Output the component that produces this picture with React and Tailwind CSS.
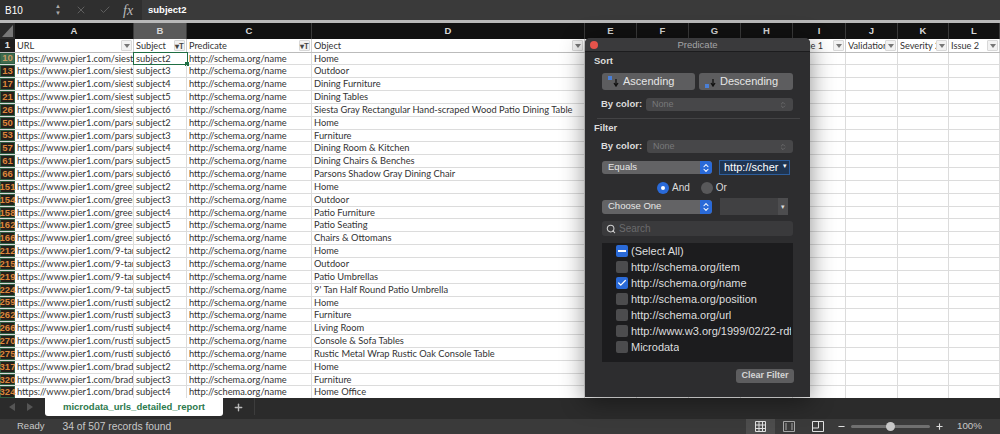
import { ChevronsUpDown, X, Check, Plus, Minus, Search } from "lucide-react";

const sans = "font-['Liberation_Sans',Arial,sans-serif]";
const cell = "font-['Lato',sans-serif]";

const rows = [
  [10, "siest", "subject2", "Home"],
  [13, "siest", "subject3", "Outdoor"],
  [17, "siest", "subject4", "Dining Furniture"],
  [21, "siest", "subject5", "Dining Tables"],
  [26, "siest", "subject6", "Siesta Gray Rectangular Hand-scraped Wood Patio Dining Table"],
  [50, "parsc", "subject2", "Home"],
  [53, "parsc", "subject3", "Furniture"],
  [57, "parsc", "subject4", "Dining Room & Kitchen"],
  [61, "parsc", "subject5", "Dining Chairs & Benches"],
  [66, "parsc", "subject6", "Parsons Shadow Gray Dining Chair"],
  [151, "greei", "subject2", "Home"],
  [154, "greei", "subject3", "Outdoor"],
  [158, "greei", "subject4", "Patio Furniture"],
  [162, "greei", "subject5", "Patio Seating"],
  [166, "greei", "subject6", "Chairs & Ottomans"],
  [212, "9-tar", "subject2", "Home"],
  [215, "9-tar", "subject3", "Outdoor"],
  [219, "9-tar", "subject4", "Patio Umbrellas"],
  [224, "9-tar", "subject5", "9' Tan Half Round Patio Umbrella"],
  [259, "rusti", "subject2", "Home"],
  [262, "rusti", "subject3", "Furniture"],
  [266, "rusti", "subject4", "Living Room"],
  [270, "rusti", "subject5", "Console & Sofa Tables"],
  [275, "rusti", "subject6", "Rustic Metal Wrap Rustic Oak Console Table"],
  [317, "bradi", "subject2", "Home"],
  [320, "bradi", "subject3", "Furniture"],
  [324, "bradi", "subject4", "Home Office"],
];

const columns = [
  ["A", "w-[119px]"],
  ["B", "w-[53px]"],
  ["C", "w-[125px]"],
  ["D", "w-[273px]"],
  ["E", "w-[52px]"],
  ["F", "w-[52px]"],
  ["G", "w-[52px]"],
  ["H", "w-[52px]"],
  ["I", "w-[53px]"],
  ["J", "w-[52px]"],
  ["K", "w-[51px]"],
  ["L", "flex-1"],
];

const filterItems = [
  ["(Select All)", "mixed"],
  ["http://schema.org/item", ""],
  ["http://schema.org/name", "checked"],
  ["http://schema.org/position", ""],
  ["http://schema.org/url", ""],
  ["http://www.w3.org/1999/02/22-rdf-syntax", ""],
  ["Microdata", ""],
];

function FilterArrow({ filtered }) {
  return (
    <span className="absolute right-px top-px flex h-[11px] w-[11px] items-center justify-center rounded-[1px] border border-[#d8d8d8] bg-[#f2f2f2]">
      {filtered ? (
        <span className="text-[8px] font-bold leading-none text-[#444]">▾T</span>
      ) : (
        <span className="h-0 w-0 border-x-[3px] border-t-[4px] border-x-transparent border-t-[#777]" />
      )}
    </span>
  );
}

function HeaderCell({ className, label, filtered }) {
  return (
    <div className={`relative h-full shrink-0 border-r border-[#cfcfcf] pl-[2px] text-[9.2px] leading-[14px] text-[#333] ${className}`}>
      <span className="block overflow-hidden whitespace-nowrap pr-[10px]">{label}</span>
      <FilterArrow filtered={filtered} />
    </div>
  );
}

function SheetRow({ row }) {
  const [num, slug, subject, object] = row;
  const active = num === 10;
  return (
    <div className="flex h-[12.85px] border-b border-[#dcdcdc] text-[9.3px] leading-[12px] text-[#333]">
      <div className={`flex w-[15px] shrink-0 items-center justify-center border border-[#2f5f43] text-[9.5px] font-bold ${sans} ${active ? "bg-[#3f6b4f] text-[#c79a62]" : "bg-[#241f1b] text-[#d9853a]"}`}>
        {num}
      </div>
      <div className="w-[119px] shrink-0 overflow-hidden whitespace-nowrap border-r border-[#dcdcdc] pl-[2px]">
        https://www.pier1.com/{slug}
      </div>
      <div className={`relative w-[53px] shrink-0 pl-[2px] ${active ? "outline outline-[#1f6e43]" : "border-r border-[#dcdcdc]"}`}>
        {subject}
        {active ? <span className="absolute -bottom-[2px] -right-[2px] h-[4px] w-[4px] bg-[#1f6e43]" /> : null}
      </div>
      <div className="w-[125px] shrink-0 border-r border-[#dcdcdc] pl-[2px]">http://schema.org/name</div>
      <div className="w-[273px] shrink-0 overflow-hidden whitespace-nowrap border-r border-[#dcdcdc] pl-[2px]">{object}</div>
      {columns.slice(4).map(([letter, width]) => (
        <div key={letter} className={`shrink-0 border-r border-[#dcdcdc] ${width}`} />
      ))}
    </div>
  );
}

function Checkbox({ state }) {
  if (state === "checked") {
    return (
      <span className="flex h-[12px] w-[12px] shrink-0 items-center justify-center rounded-[2px] bg-[#2a6ad8]">
        <Check size={10} strokeWidth={3} className="text-white" />
      </span>
    );
  }
  if (state === "mixed") {
    return (
      <span className="flex h-[12px] w-[12px] shrink-0 items-center justify-center rounded-[2px] bg-[#2a6ad8]">
        <span className="h-[2px] w-[8px] bg-white" />
      </span>
    );
  }
  return <span className="h-[12px] w-[12px] shrink-0 rounded-[2px] bg-[#4c4c4e]" />;
}

function SortIcon({ descending }) {
  return (
    <svg width="14" height="14" viewBox="0 0 14 14" className="shrink-0">
      <rect x="1" y={descending ? 9 : 1} width="4" height="4" fill="#4a7fd6" />
      <path d="M9 4v6M7 8l2 3 2-3" stroke="#111" strokeWidth="1.3" fill="none" />
    </svg>
  );
}

function SelectStepper() {
  return (
    <span className="flex h-full w-[12px] items-center justify-center rounded-r-[3px] bg-[#2a6ad8]">
      <ChevronsUpDown size={10} strokeWidth={2.5} className="text-white" />
    </span>
  );
}

function FilterPanel() {
  return (
    <div className={`absolute left-[585px] top-[38px] h-[359px] w-[225px] overflow-hidden rounded-t-[5px] bg-[#2d2d2f] text-[#dcdcdc] shadow-[0_4px_24px_rgba(0,0,0,0.45)] ${sans}`}>
      <div className="relative h-[14px] border-b border-[#1c1c1e] bg-[#3a3a3c] text-center text-[9.5px] leading-[14px] text-[#a5a5a7]">
        <span className="absolute left-[5px] top-[3px] h-[8px] w-[8px] rounded-full bg-[#e5534b]" />
        Predicate
      </div>
      <div className="px-[5px] pt-[2px]">
        <div className="pl-[4px] text-[9.5px] font-bold leading-[14px]">Sort</div>
        <div className="ml-[12px] mt-[5px] flex gap-[4px]">
          <button className="flex h-[17px] w-[93px] items-center gap-[2px] rounded-[3px] bg-[#5d5d5f] pl-[5px] text-[11px] text-[#e6e6e6]">
            <SortIcon />Ascending
          </button>
          <button className="flex h-[17px] w-[94px] items-center gap-[2px] rounded-[3px] bg-[#5d5d5f] pl-[5px] text-[11px] text-[#e6e6e6]">
            <SortIcon descending />Descending
          </button>
        </div>
        <div className="mt-[8px] flex h-[13px] items-center">
          <span className="w-[56px] pl-[11px] text-[9.5px] font-bold">By color:</span>
          <div className="flex h-[13px] w-[147px] items-center justify-between rounded-[3px] bg-[#474749] px-[6px] text-[9px] text-[#78787a]">
            None<ChevronsUpDown size={8} />
          </div>
        </div>
        <div className="ml-[7px] mr-[5px] mt-[7px] border-t border-[#434345]" />
        <div className="mt-[1px] pl-[4px] text-[9.5px] font-bold leading-[15px]">Filter</div>
        <div className="mt-[5px] flex h-[13px] items-center">
          <span className="w-[57px] pl-[11px] text-[9.5px] font-bold">By color:</span>
          <div className="flex h-[13px] w-[146px] items-center justify-between rounded-[3px] bg-[#474749] px-[6px] text-[9px] text-[#78787a]">
            None<ChevronsUpDown size={8} />
          </div>
        </div>
        <div className="mt-[7px] flex items-center gap-[7px] pl-[12px]">
          <div className="flex h-[13px] w-[110px] items-center justify-between overflow-hidden rounded-[3px] bg-[#636365] pl-[6px] text-[9.5px] text-[#e6e6e6]">
            Equals<SelectStepper />
          </div>
          <div className="relative flex h-[15px] w-[71px] items-center border border-[#2c5d9c] bg-[#1f3552] pl-[4px] text-[11px] text-white">
            http://scher
            <span className="absolute right-[2px] top-[1px] text-[7px] leading-none">▾</span>
          </div>
        </div>
        <div className="mt-[6px] flex h-[13px] items-center pl-[67px] text-[10px]">
          <span className="flex h-[12px] w-[12px] items-center justify-center rounded-full bg-[#2a6ad8]">
            <span className="h-[4px] w-[4px] rounded-full bg-white" />
          </span>
          <span className="ml-[3px]">And</span>
          <span className="ml-[11px] h-[12px] w-[12px] rounded-full bg-[#58585a]" />
          <span className="ml-[3px]">Or</span>
        </div>
        <div className="mt-[4px] flex items-center gap-[8px] pl-[12px]">
          <div className="flex h-[14px] w-[110px] items-center justify-between overflow-hidden rounded-[3px] bg-[#636365] pl-[6px] text-[9.5px] text-[#e6e6e6]">
            Choose One<SelectStepper />
          </div>
          <div className="relative h-[17px] w-[68px] bg-[#414143]">
            <span className="absolute right-0 top-0 flex h-full w-[10px] items-center justify-center bg-[#4d4d4f] text-[7px] leading-none">▾</span>
          </div>
        </div>
        <div className="ml-[12px] mt-[6px] flex h-[15px] w-[191px] items-center gap-[3px] rounded-[3px] bg-[#3a3a3c] pl-[4px] text-[10px] text-[#6a6a6c]">
          <Search size={10} strokeWidth={2.5} className="text-[#d0d0d0]" />Search
        </div>
        <div className="ml-[12px] mt-[7px] h-[119px] w-[191px] overflow-hidden bg-[#1c1c1e] pl-[14px] pr-[2px]">
          {filterItems.map(([label, state]) => (
            <div key={label} className="flex h-[16px] items-center gap-[3px] whitespace-nowrap text-[11px] text-[#dedede]">
              <Checkbox state={state} />
              <span className="min-w-0 overflow-hidden">{label}</span>
            </div>
          ))}
        </div>
        <div className="mt-[7px] flex justify-end pr-[11px]">
          <button className="h-[14px] w-[58px] rounded-[3px] bg-[#5d5d5f] text-[9px] font-bold text-[#d5d5d5]">Clear Filter</button>
        </div>
      </div>
    </div>
  );
}

export default function App() {
  return (
    <div className={`relative flex h-[434px] w-[1000px] flex-col overflow-hidden bg-white ${sans}`}>
      <div className="flex h-[20px] items-center bg-[#2f2f2f] text-white">
        <div className="w-[52px] pl-[5px] text-[10px]">B10</div>
        <div className="flex w-[12px] flex-col items-center text-[6px] leading-[7px] text-[#aaa]">
          <span>▲</span><span>▼</span>
        </div>
        <X size={12} className="ml-[11px] text-[#5f5f5f]" />
        <Check size={12} className="ml-[12px] text-[#5f5f5f]" />
        <span className="ml-[12px] w-[10px] font-['Liberation_Serif',serif] text-[14px] italic text-[#bbb]">fx</span>
        <div className="ml-[9px] flex h-full flex-1 items-center bg-[#3a3a3a] pl-[6px] text-[9.5px] font-bold">subject2</div>
      </div>
      <div className="h-[3px] bg-[#b9b9b9]" />
      <div className="flex h-[16px] bg-[#111] text-[9.5px] font-bold leading-[16px] text-[#d8d8d8]">
        <svg width="15" height="16" viewBox="0 0 15 16" className="shrink-0">
          <rect width="15" height="16" fill="#2a2a2a" />
          <path d="M13 2v12H2z" fill="#777" />
        </svg>
        {columns.map(([letter, width]) => (
          <div key={letter} className={`shrink-0 border-r border-[#3a3a3a] text-center ${width} ${letter === "B" ? "bg-[#5a5a5a]" : ""}`}>
            {letter}
          </div>
        ))}
      </div>
      <div className={`min-h-0 flex-1 overflow-hidden ${cell}`}>
        <div className="flex h-[13.5px] border-b border-[#bbb]">
          <div className={`flex w-[15px] shrink-0 items-center justify-center bg-[#1f1f1f] text-[9.5px] font-bold text-[#e5e5e5] ${sans}`}>1</div>
          <HeaderCell className="w-[119px]" label="URL" />
          <HeaderCell className="w-[53px]" label="Subject" filtered />
          <HeaderCell className="w-[125px]" label="Predicate" filtered />
          <HeaderCell className="w-[273px]" label="Object" />
          <HeaderCell className="w-[52px]" label="" />
          <HeaderCell className="w-[52px]" label="" />
          <HeaderCell className="w-[52px]" label="" />
          <HeaderCell className="w-[52px]" label="" />
          <HeaderCell className="w-[53px]" label="Issue 1" />
          <HeaderCell className="w-[52px]" label="Validation" />
          <HeaderCell className="w-[51px]" label="Severity 2" />
          <HeaderCell className="w-[51px]" label="Issue 2" />
        </div>
        {rows.map((row) => (
          <SheetRow key={row[0]} row={row} />
        ))}
      </div>
      <div className="flex h-[21px] items-start bg-[#2b2b2b]">
        <span className="ml-[9px] mt-[5px] h-0 w-0 border-y-[4px] border-r-[6px] border-y-transparent border-r-[#555]" />
        <span className="ml-[12px] mt-[5px] h-0 w-0 border-y-[4px] border-l-[6px] border-y-transparent border-l-[#555]" />
        <div className="ml-[12px] flex h-[18px] w-[178px] items-center justify-center rounded-b-[3px] bg-white text-[9.5px] font-bold text-[#2d7a4d]">
          microdata_urls_detailed_report
        </div>
        <Plus size={11} strokeWidth={3} className="ml-[10px] mt-[4px] text-[#bbb]" />
        <span className="ml-[10px] h-[17px] w-px bg-[#3d3d3d]" />
      </div>
      <div className="flex h-[15px] items-center bg-[#3a3a3a] text-[#c8c8c8]">
        <span className="ml-[17px] text-[9.5px]">Ready</span>
        <span className="ml-[18px] text-[10.3px]">34 of 507 records found</span>
        <div className="ml-auto flex h-full w-[29px] items-center justify-center bg-[#4d4d4d]">
          <svg width="11" height="11" viewBox="0 0 11 11" fill="none" stroke="#e0e0e0"><path d="M.5.5h10v10H.5zM.5 4h10M.5 7.5h10M4 .5v10M7.5.5v10" /></svg>
        </div>
        <svg width="12" height="11" viewBox="0 0 12 11" fill="none" stroke="#a8a8a8" className="ml-[8px]"><path d="M.5.5h11v10H.5zM3 2v7M9 2v7" /></svg>
        <svg width="12" height="11" viewBox="0 0 12 11" fill="none" stroke="#e0e0e0" className="ml-[17px]"><path d="M.5.5h11v10H.5zM.5 7h6V.5" /></svg>
        <Minus size={9} strokeWidth={3} className="ml-[13px] text-[#ddd]" />
        <div className="relative ml-[5px] h-[3px] w-[79px] rounded-full bg-[#6f6f6f]">
          <span className="absolute left-[35px] top-[-3px] h-[9px] w-[9px] rounded-full bg-[#c8c8c8]" />
        </div>
        <Plus size={9} strokeWidth={3} className="ml-[5px] text-[#ddd]" />
        <span className="ml-[13px] mr-[18px] text-[9.8px]">100%</span>
      </div>
      <FilterPanel />
    </div>
  );
}
